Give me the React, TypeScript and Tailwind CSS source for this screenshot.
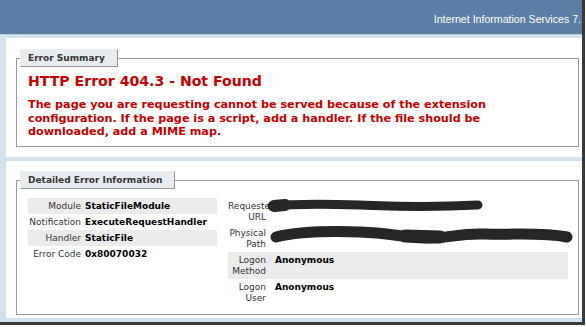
const font = { fontFamily: '"DejaVu Sans", Verdana, sans-serif' };

function LeftRow({ label, value, alt }: { label: string; value: string; alt?: boolean }) {
  return (
    <div className={`flex h-[16px] items-center ${alt ? 'bg-[#ebebeb]' : ''}`}>
      <div className="w-[53px] shrink-0 text-right text-[9px] leading-[11px] text-[#333]">{label}</div>
      <div className="pl-[4px] text-[9px] font-bold leading-[11px] text-black whitespace-nowrap">{value}</div>
    </div>
  );
}

function RightRow({ label, value, alt }: { label: string[]; value?: string; alt?: boolean }) {
  return (
    <div className={`flex h-[27px] pt-[3px] ${alt ? 'bg-[#ebebeb]' : ''}`}>
      <div className="w-[38px] shrink-0 text-right text-[9px] leading-[11px] text-[#333]">
        {label.map((l) => (
          <div key={l} className="whitespace-nowrap">{l}</div>
        ))}
      </div>
      <div className="pl-[9px] text-[9px] font-bold leading-[11px] text-black">{value}</div>
    </div>
  );
}

function Legend({ children }: { children: React.ReactNode }) {
  return (
    <legend className="ml-[3px] h-[18px] border-t border-l border-t-[#ededed] border-l-[#ededed] border-r border-b border-r-[#969696] border-b-[#969696] bg-[#e7ecf0] pl-[7px] pr-[12px] text-[9px] font-bold leading-[16px] text-[#333]">
      {children}
    </legend>
  );
}

export default function App() {
  return (
    <div className="relative h-[327px] w-[586px] overflow-hidden bg-white" style={font}>
      <div className="flex h-[325px] w-[585px] flex-col border-r-[3px] border-b-[3px] border-[#3a3a3a] bg-[#d2e2ef]">
        {/* Server version bar */}
        <div className="flex h-[35px] shrink-0 items-center justify-end whitespace-nowrap border-b border-[#c1cfdd] bg-[#5a7fa5] pr-[1px] pt-[6px] text-[10.6px] text-white" style={{ fontFamily: '"Liberation Sans", Arial, sans-serif' }}>
          Internet Information Services 7.
        </div>

        <div className="flex flex-col gap-[4px] pl-[6px] pt-[3px]">
          {/* Error summary */}
          <div className="h-[119px] bg-white pt-[11px] pl-[10px] pr-[3px]">
            <fieldset className="h-[98px] border border-[#9a9a9a] p-0">
              <Legend>Error Summary</Legend>
              <div className="pl-[11px] pt-[6px]">
                <h3 className="text-[14.1px] font-bold leading-[17px] text-[#c40000]">HTTP Error 404.3 - Not Found</h3>
                <p className="mt-[8px] whitespace-nowrap text-[11.2px] font-bold leading-[13.5px] text-[#c40000]">
                  The page you are requesting cannot be served because of the extension
                  <br />
                  configuration. If the page is a script, add a handler. If the file should be
                  <br />
                  downloaded, add a MIME map.
                </p>
              </div>
            </fieldset>
          </div>

          {/* Detailed error information */}
          <div className="h-[157px] bg-white pt-[10px] pl-[10px] pr-[3px]">
            <fieldset className="h-[144px] border border-[#9a9a9a] p-0">
              <Legend>Detailed Error Information</Legend>
              <div className="flex pl-[11px] pt-[9px]">
                <div className="w-[189px] shrink-0">
                  <LeftRow label="Module" value="StaticFileModule" alt />
                  <LeftRow label="Notification" value="ExecuteRequestHandler" />
                  <LeftRow label="Handler" value="StaticFile" alt />
                  <LeftRow label="Error Code" value="0x80070032" />
                </div>
                <div className="ml-[11px] w-[340px] shrink-0">
                  <RightRow label={['Requested', 'URL']} />
                  <RightRow label={['Physical', 'Path']} />
                  <RightRow label={['Logon', 'Method']} value="Anonymous" alt />
                  <RightRow label={['Logon', 'User']} value="Anonymous" />
                </div>
              </div>
            </fieldset>
          </div>
        </div>
      </div>

      {/* redaction scribbles */}
      <svg className="pointer-events-none absolute left-0 top-0" width="586" height="327" viewBox="0 0 586 327">
        <g fill="none" stroke="#262626" strokeLinecap="round" strokeLinejoin="round">
          <path d="M272 206 C 300 203, 330 204, 360 205 S 420 208, 478 205" strokeWidth="9" />
          <path d="M274 206 L 285 205" strokeWidth="12" />
          <path d="M276 237 C 300 231, 330 231, 360 232 S 400 237, 425 238 S 455 233, 485 234 S 540 232, 567 237" strokeWidth="11" />
          <path d="M405 236 L 440 237" strokeWidth="13" />
        </g>
      </svg>
    </div>
  );
}
